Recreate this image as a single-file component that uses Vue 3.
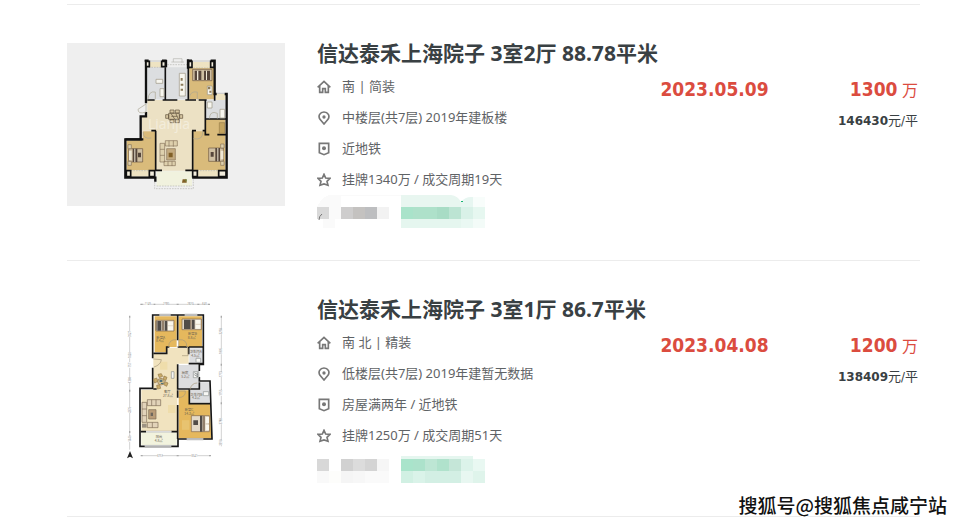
<template>
    <main class="page">
        <ul class="deal-list">
            <li v-for="deal in deals" :key="deal.id" class="deal">
                <a class="thumb" href="#" :aria-label="deal.title">
                    <svg v-if="deal.id === 1" class="plan plan-grey" viewBox="21 21 654 489">
                        <!-- floors -->
                        <path fill="#ece1c4" d="M262 192H436V404H288V284H246V240H262Z" />
                        <path fill="#dcdee0" d="M262 94H316V190H262ZM320 94H384V190H320ZM438 192H496V248H438Z" />
                        <path fill="#d9bb7b" d="M388 96H462V190H388ZM200 314L248 312V286H286V402H200ZM400 286H438V250H496V402H400Z" />
                        <path fill="#eee3c2" d="M266 78H306V94H266ZM396 78H454V96H396ZM212 402H268V422H212ZM412 402H476V422H412ZM468 174H496V192H468Z" />
                        <path fill="#f1f2de" d="M290 406H396V450H290Z" />
                        <!-- windows -->
                        <g fill="none" stroke="#b5b5b0" stroke-width="2">
                            <path d="M266 75H306M396 75H454M212 423H268M412 423H474M470 172H494M340 78V68H366V80M334 78H372" />
                            <path stroke-dasharray="5 3" d="M314 86H386M266 94H312M392 96H458M212 404H284M404 404H474M284 430V458H400V430M290 450H396" />
                        </g>
                        <!-- walls -->
                        <g fill="none" stroke="#111" stroke-width="7">
                            <path d="M258 72V202M258 228V241H242V310H196V425H286V437M400 404V425H500V174H494M470 174H464V74H452" />
                            <path d="M384 70V98M318 72V94M254 74H266M306 74H320M384 74H396M196 310H250" />
                            <path stroke-width="5" d="M316 94V190M385 94V192H408M262 192H284M308 192H352M376 192H386M416 192H440M436 192V296H448M472 296H498M438 249H498M287 284V404M274 284H288M398 284V404M396 284H408M286 403H306M376 403H400M464 172V194M428 284H438" />
                        </g>
                        <g fill="#f2eddd" stroke="#111" stroke-width="5">
                            <path d="M258 76H268V92H258ZM305 76H316V92H305ZM386 76H396V94H386ZM452 76H462V94H452ZM199 404H212V422H199ZM268 404H284V422H268ZM398 404H412V422H398ZM476 404H498V422H476Z" />
                        </g>
                        <!-- doors -->
                        <g fill="none" stroke="#aaa692" stroke-width="2">
                            <path d="M234 220L258 204V228Q234 236 234 220ZM264 190Q266 164 286 168V190M388 190Q388 164 412 168V190M448 248Q450 222 472 232V248M400 308Q430 314 428 286M274 306Q248 310 250 288" />
                        </g>
                        <!-- furniture -->
                        <g fill="#f7f6ef" stroke="#9b9482" stroke-width="2">
                            <path d="M358 112H376V180H358ZM288 130H308V142H288ZM300 158H312V182H300ZM442 198H456V216H442ZM480 220H494V246H480ZM442 150H456V176H442Z" />
                        </g>
                        <path fill="#c3a35e" stroke="#99804d" stroke-width="2" d="M478 260H494V292H478Z" />
                        <path fill="#8c7b5a" d="M362 126H368V134H362ZM362 143H370V149H362ZM362 158H369V164H362ZM444 152H451V160H444ZM448 164H454V170H448Z" />
                        <g fill="#cfbfa2" stroke="#6a5540" stroke-width="2">
                            <path d="M398 100H456V134H398ZM206 338H248V378H206ZM446 336H490V376H446Z" />
                        </g>
                        <path fill="#56463b" d="M404 104H424V132H404ZM432 104H450V132H432ZM218 338H232V378H218ZM234 350H243V364H234ZM466 336H480V376H466ZM452 348H461V362H452Z" />
                        <path fill="#f0e9d7" d="M411 104H415V132H411ZM438 104H441V132H438ZM223 338H226V378H223ZM472 336H475V376H472ZM207 344H215V372H207ZM482 344H490V370H482Z" />
                        <g fill="#ded0ad" stroke="#86735a" stroke-width="2">
                            <path d="M204 326H214V338H204ZM204 376H214V388H204ZM482 324H492V336H482ZM482 376H492V388H482Z" />
                            <path d="M316 314H352V330H316ZM300 322H314V378H300ZM312 376H346V389H312Z" />
                            <path fill="#c4ab80" d="M320 338H346V372H320Z" />
                            <path d="M327 332V314M340 332V314M300 340H314M300 358H314M324 376V390M336 376V390" />
                        </g>
                        <path fill="#816027" d="M326 350H338V364H326ZM368 430H380V440H366Z" />
                        <path fill="#6f8d45" d="M376 428L381 432L377 438Z" />
                        <g fill="#d8c7a1" stroke="#5d4e39" stroke-width="2">
                            <path d="M326 232H358V250H326ZM330 222H342V231H330ZM346 222H358V231H346ZM330 251H342V260H330ZM346 251H358V260H346ZM317 236H326V247H317ZM359 236H368V247H359Z" />
                            <path d="M334 234L344 249M348 234L355 249M334 241H352" />
                        </g>
                        <text class="plan-mark" x="264" y="279">Lianjia</text>
                    </svg>
                    <svg v-else class="plan" viewBox="-129 12 654 489">
                        <!-- floors -->
                        <path fill="#f1e3bf" d="M130 176H168V158H236V206H202V408H94V284H130Z" />
                        <path fill="#e5b85d" d="M134 64H200V156H170V172H134ZM206 64H276V156H206ZM206 286H238V326H300L304 430H206Z" />
                        <path fill="#dcdddf" d="M238 160H278V204H238ZM206 210H266V280H206ZM270 262H298V322H240V284H270Z" />
                        <path fill="#f2f3de" d="M94 412H200V450H94Z" />
                        <path fill="#eed48f" d="M150 200H172V224H150ZM174 330H196V354H174ZM216 376H238V404H216Z" opacity=".4" />
                        <!-- walls -->
                        <g fill="none" stroke="#171717" stroke-width="5">
                            <path d="M128 58V190M128 218V280H90V454H204V432H306L300 258H268V246M268 228V208H280V60H126" />
                            <path d="M203 60V136M203 156H232M236 156H280M236 156V178M236 206H282M203 208V282H268V262M203 286V308M203 330V432M238 284V326H302M130 175H170V156H178M92 410H108M184 410H202M130 282H140" />
                        </g>
                        <path fill="none" stroke="#eee" stroke-width="4" d="M148 60H182M224 60H262M104 453H184M230 432H280M268 228V246M108 410H184" />
                        <path fill="none" stroke="#989c9c" stroke-width="1" d="M148 57H182M148 62H182M224 57H262M224 62H262M104 451H184M104 456H184M230 430H280M230 435H280M108 408H184M108 412H184" />
                        <path fill="none" stroke="#a7997a" stroke-width="2" d="M130 192L154 194Q152 210 132 216M176 156Q176 132 200 134M206 156V134Q232 132 230 156M206 308Q228 306 226 288H206M216 182H234V160M240 284Q244 264 262 264" />
                        <!-- beds -->
                        <g fill="#e3d9c8" stroke="#7d6449" stroke-width="2">
                            <path d="M138 76H192V108H138ZM216 72H274V104H216ZM244 362H298V410H244Z" />
                        </g>
                        <path fill="#514c48" d="M142 78H154V107H142ZM164 78H172V107H164ZM222 74H240V102H222ZM246 74H254V102H246ZM250 376H264V390H250ZM270 362H277V410H270Z" />
                        <path fill="#92806c" d="M156 78H162V107H156ZM240 74H245V102H240ZM278 362H285V410H278ZM136 78H141V106H136Z" />
                        <path fill="#faf7ed" d="M174 80H189V91H174ZM174 94H189V106H174ZM257 75H271V86H257ZM257 90H271V101H257ZM287 366H297V384H287ZM287 389H297V406H287Z" />
                        <!-- sofa and dining set -->
                        <g fill="#e2d3b9" stroke="#7b6a54" stroke-width="2">
                            <path d="M112 314H152V332H112ZM96 322H110V382H96ZM112 382H144V398H112Z" />
                            <path fill="#b99c77" d="M116 344H138V372H116Z" />
                            <path d="M125 332V314M138 332V314M96 342H110M96 362H110M127 382V398" />
                        </g>
                        <path fill="#6e675c" d="M122 353H129V363H122Z" />
                        <path fill="#9d9282" d="M96 386H110V398H96Z" />
                        <circle cx="153" cy="260" r="17" fill="#eadfcb" />
                        <g fill="#c9ab69" stroke="#94794a" stroke-width="2">
                            <path d="M144 238L154 236L158 244L148 248ZM162 243L171 247L167 257L160 253ZM130 253L140 249L144 259L134 264ZM165 260L174 264L170 274L161 269ZM140 271L149 269L152 280L142 282Z" />
                            <circle cx="153" cy="260" r="10" fill="#d0bc8c" />
                        </g>
                        <path fill="#517079" d="M149 254H157V261H149ZM153 264H160V267H153Z" />
                        <!-- fixtures -->
                        <path fill="#f7f7f4" stroke="#8d9190" stroke-width="2" d="M250 230H266V248H250ZM280 290H296V302H280ZM258 190H272V202H258ZM184 230H192V250H184Z" />
                        <path fill="none" stroke="#5d6465" stroke-width="2" d="M253 233L263 239M253 239L263 245M262 232V246" />
                        <!-- room labels -->
                        <g class="room">
                            <text x="139" y="132">卧室A</text>
                            <text x="138" y="142">8.4㎡</text>
                            <text x="234" y="121">卧室B</text>
                            <text x="233" y="131">8.8㎡</text>
                            <text x="239" y="174">卫生间A</text>
                            <text x="244" y="185">4.5㎡</text>
                            <text x="215" y="237">厨房</text>
                            <text x="214" y="248">5.2㎡</text>
                            <text x="162" y="295">客厅</text>
                            <text x="159" y="306">27.8㎡</text>
                            <text x="241" y="302">卫生间B</text>
                            <text x="246" y="313">4.2㎡</text>
                            <text x="224" y="348">卧室C</text>
                            <text x="223" y="359">14.3㎡</text>
                            <text x="137" y="430">阳台</text>
                            <text x="134" y="441">4.8㎡</text>
                        </g>
                        <!-- dimension lines -->
                        <g fill="none" stroke="#bbb" stroke-width="2">
                            <path d="M94 28H298M94 482H300M59 64V464M334 64V454" />
                        </g>
                        <path stroke="#fff" stroke-width="6" d="M104 28H122M160 28H176M232 28H248M278 28H290M142 482H156M244 482H262M59 108V126M59 172V190M59 202V218M59 248V262M59 338V354M59 424V440M334 104V118M334 160V178M334 232V246M334 286V302M334 370V388M334 436V450" />
                        <g class="measure">
                            <text x="104" y="31">1149</text>
                            <text x="159" y="31">2780</text>
                            <text x="232" y="31">2820</text>
                            <text x="277" y="31">640</text>
                            <text x="141" y="485">3751</text>
                            <text x="244" y="485">3541</text>
                            <text transform="translate(62 126) rotate(-90)">3927</text>
                            <text transform="translate(62 190) rotate(-90)">1020</text>
                            <text transform="translate(62 217) rotate(-90)">757</text>
                            <text transform="translate(62 264) rotate(-90)">1380</text>
                            <text transform="translate(62 354) rotate(-90)">4376</text>
                            <text transform="translate(62 440) rotate(-90)">1446</text>
                            <text transform="translate(337 118) rotate(-90)">3298</text>
                            <text transform="translate(337 177) rotate(-90)">1805</text>
                            <text transform="translate(337 247) rotate(-90)">1773</text>
                            <text transform="translate(337 302) rotate(-90)">1755</text>
                            <text transform="translate(337 388) rotate(-90)">3788</text>
                            <text transform="translate(337 452) rotate(-90)">1390</text>
                        </g>
                        <path fill="#aaa" d="M91 26H98V30H91ZM131 26H136V30H131ZM200 26H206V30H200ZM262 26H268V30H262ZM294 26H300V30H294ZM92 480H98V484H92ZM200 480H206V484H200ZM297 480H303V484H297ZM57 62H61V68H57ZM57 284H61V290H57ZM57 408H61V414H57ZM332 62H336V68H332ZM332 206H336V212H332ZM332 322H336V328H332Z" />
                        <path fill="#222" d="M60 468L69 490L60 485L51 490Z" />
                    </svg>
                </a>

                <div class="info">
                    <h2><a href="#">{{ deal.title }}</a></h2>
                    <div class="detail">
                        <div class="facts">
                            <p v-for="(fact, index) in deal.facts" :key="index" class="fact">
                                <svg class="icon" viewBox="0 0 42 42" aria-hidden="true">
                                    <path v-for="d in icons[index]" :key="d" :d="d" />
                                    <circle v-if="index === 1" class="dot" cx="21" cy="18" r="5" />
                                    <circle v-if="index === 2" class="dot" cx="21" cy="19" r="6" />
                                </svg>
                                <span>{{ fact }}</span>
                            </p>
                            <svg class="mosaic" viewBox="0 0 168 33" shape-rendering="crispEdges" aria-hidden="true">
                                <template v-if="deal.id === 1">
                                    <path fill="#fafafa" d="M12 0H150V24H18V33H6V24H0V12Q4 3 12 0Z" />
                                    <path fill="#fff" d="M24 1H84V12H24ZM72 12H84V33H72Z" />
                                </template>
                                <g v-for="(row, r) in deal.blocks" :key="r">
                                    <rect
                                        v-for="(cell, c) in row.cells"
                                        :key="c"
                                        :x="cell[0] * 12"
                                        :y="row.y"
                                        :width="cell[1] * 12"
                                        :height="row.h"
                                        :fill="cell[2]"
                                    />
                                </g>
                                <template v-if="deal.id === 1">
                                    <path fill="#fff" shape-rendering="auto" d="M134 0H168V2H154Q148 2 144 7Q141 1 134 0Z" />
                                    <path fill="#16b573" d="M144 6H146V7H144Z" />
                                    <path fill="none" stroke="#777" stroke-width="1" shape-rendering="auto" d="M5 19Q2 21 2 25" />
                                </template>
                            </svg>
                        </div>
                        <div class="sale">
                            <strong class="date">{{ deal.date }}</strong>
                            <div class="price">
                                <p class="total"><strong>{{ deal.total }}</strong> 万</p>
                                <p class="unit"><strong>{{ deal.unit }}</strong>元/平</p>
                            </div>
                        </div>
                    </div>
                </div>
            </li>
        </ul>
        <div class="watermark">搜狐号@搜狐焦点咸宁站</div>
    </main>
</template>

<script setup>
import { ref } from 'vue';

// one entry per fact line: house, pin, badge, star
const icons = [
    ['M2 22L21 4L40 22', 'M8 18V37H17V26H25V37H34V18'],
    ['M21 39L9 25Q4 17 8 10Q12 3 21 3Q30 3 34 10Q38 17 33 25Z'],
    ['M7 4H35V32L21 38L7 32Z'],
    ['M21 4L26 15L39 16L30 25L33 37L21 33L9 37L12 25L3 16L16 15Z'],
];

const deals = ref([
    {
        id: 1,
        title: '信达泰禾上海院子 3室2厅 88.78平米',
        facts: ['南 | 简装', '中楼层(共7层) 2019年建板楼', '近地铁', '挂牌1340万 / 成交周期19天'],
        date: '2023.05.09',
        total: '1300',
        unit: '146430',
        // [column, span, colour]
        blocks: [
            { y: 0, h: 12, cells: [[7, 5, '#e8f6f0'], [12, 1, '#e7f6f1'], [13, 1, '#f8fdfb']] },
            {
                y: 12,
                h: 12,
                cells: [
                    [0, 1, '#d9d9d9'], [1, 1, '#fafafa'], [2, 1, '#cecdcd'], [3, 1, '#c4c2c0'], [4, 1, '#bdbec0'], [5, 1, '#f2f2f2'],
                    [7, 1, '#a9e3ca'], [8, 2, '#aee1ca'], [10, 1, '#a8dcc5'], [11, 1, '#bce4d3'], [12, 1, '#d9f1e8'], [13, 1, '#e6f7f0'],
                ],
            },
            { y: 24, h: 9, cells: [[7, 5, '#e5f6ef'], [12, 1, '#eaf8f3'], [13, 1, '#f3fbf8']] },
        ],
    },
    {
        id: 2,
        title: '信达泰禾上海院子 3室1厅 86.7平米',
        facts: ['南 北 | 精装', '低楼层(共7层) 2019年建暂无数据', '房屋满两年 / 近地铁', '挂牌1250万 / 成交周期51天'],
        date: '2023.04.08',
        total: '1200',
        unit: '138409',
        blocks: [
            { y: 5, h: 3, cells: [[7, 6, '#e5f6ef']] },
            {
                y: 8,
                h: 12,
                cells: [
                    [0, 1, '#d8d8d8'], [2, 1, '#d1d1d1'], [3, 1, '#dcdcdc'], [4, 1, '#d4d4d4'], [5, 1, '#f6f6f6'],
                    [7, 1, '#a9e4cb'], [8, 1, '#ace2cb'], [9, 1, '#bde6d4'], [10, 1, '#b0e2cc'], [11, 1, '#c5e6d8'], [12, 1, '#dcf3ea'], [13, 1, '#e9f8f2'],
                ],
            },
            {
                y: 20,
                h: 12,
                cells: [
                    [0, 1, '#f9f9f9'], [1, 1, '#fdfdfb'], [2, 1, '#f5f5f5'], [3, 1, '#f7f7f7'], [4, 2, '#fafafa'],
                    [7, 1, '#d1f0e3'], [8, 1, '#daf3e9'], [9, 3, '#d3efe4'], [12, 1, '#e8f7f1'], [13, 1, '#dff4eb'],
                ],
            },
        ],
    },
]);
</script>

<style>
body {
    background: #fff;
}
</style>

<style scoped>
.page {
    position: relative;
    padding: 4px 49px 0 67px;
    font-family: "Noto Sans", "Noto Sans CJK SC", sans-serif;
    font-size: 13px;
    color: #5f6366;
}

.deal-list {
    margin: 0;
    padding: 0;
    list-style: none;
    border-top: 1px solid #ececec;
}

.deal {
    display: flex;
    align-items: flex-start;
    gap: 32px;
    padding: 38px 0 32px;
    border-bottom: 1px solid #ececec;
}

.thumb {
    flex: none;
    width: 218px;
}

.plan {
    display: block;
    width: 100%;
}

.plan-grey {
    background: #efefef;
}

.plan-mark {
    font-family: "Open Sans", sans-serif;
    font-size: 42px;
    fill: #fff;
    opacity: 0.4;
}

.room {
    font-family: "Noto Sans CJK SC", sans-serif;
    font-size: 10px;
    fill: #6b6250;
}

.measure {
    font-size: 8px;
    fill: #888;
}

.info {
    flex: 1;
}

h2 {
    margin: 0 0 8px;
    font-size: 21px;
    font-weight: 700;
    line-height: 20px;
    white-space: nowrap;
}

h2 a {
    color: #394043;
    text-decoration: none;
}

.detail {
    display: flex;
    align-items: flex-start;
}

.facts {
    flex: 4;
}

.fact {
    display: flex;
    align-items: center;
    gap: 11px;
    margin: 0;
    line-height: 31px;
    white-space: nowrap;
}

.icon {
    width: 14px;
    height: 14px;
    fill: none;
    stroke: #777;
    stroke-width: 5;
}

.icon .dot {
    fill: #777;
    stroke: none;
}

.mosaic {
    display: block;
    width: 168px;
    height: 33px;
}

.sale {
    flex: 3;
    display: flex;
    justify-content: space-between;
    padding-right: 2px;
    font-family: "DejaVu Sans Condensed", "Noto Sans CJK SC", sans-serif;
}

.date,
.total strong {
    font-size: 19px;
}

.date,
.total {
    line-height: 36px;
    color: #db4c3f;
}

.price {
    text-align: right;
}

.price p {
    margin: 0;
    white-space: nowrap;
}

.total {
    font-size: 16px;
}

.unit {
    line-height: 24px;
    color: #394043;
}

.unit strong {
    font-family: "DejaVu Sans", sans-serif;
    font-size: 12px;
}

.watermark {
    position: absolute;
    right: 22px;
    bottom: -2px;
    font-family: "Noto Sans CJK SC", sans-serif;
    font-size: 19px;
    font-weight: 500;
    line-height: 28px;
    color: #111;
    text-shadow: 1px 0 #fff, -1px 0 #fff, 0 1px #fff, 0 -1px #fff;
}
</style>
